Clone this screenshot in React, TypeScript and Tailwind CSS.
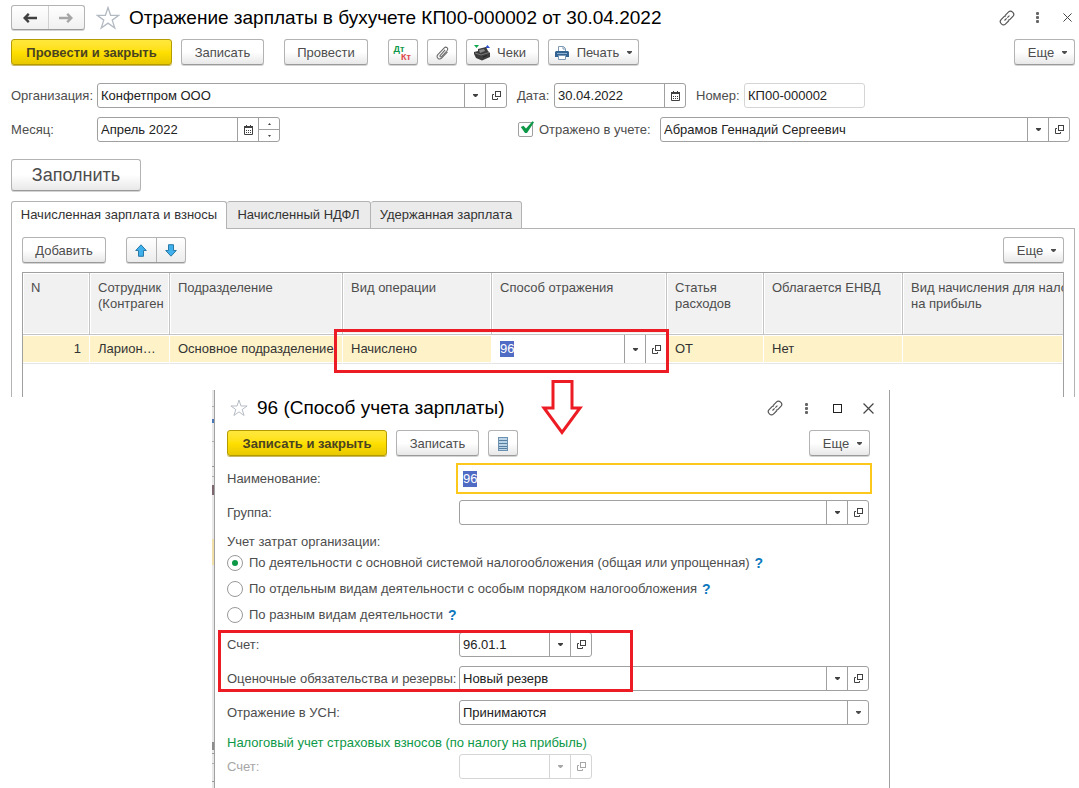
import { useState, type ReactNode } from 'react';
import clsx from 'clsx';

const TABS = ['Начисленная зарплата и взносы', 'Начисленный НДФЛ', 'Удержанная зарплата'];
const TAB_WIDTHS = ['w-[216px]', 'w-[144px]', 'w-[151px]'];

const COLUMNS = [
  { title: 'N', width: 'w-[67px]' },
  { title: 'Сотрудник (Контраген', width: 'w-[80px]' },
  { title: 'Подразделение', width: 'w-[173px]' },
  { title: 'Вид операции', width: 'w-[149px]' },
  { title: 'Способ отражения', width: 'w-[175px]' },
  { title: 'Статья расходов', width: 'w-[97px]' },
  { title: 'Облагается ЕНВД', width: 'w-[139px]' },
];

const COST_OPTIONS = [
  'По деятельности с основной системой налогообложения (общая или упрощенная)',
  'По отдельным видам деятельности с особым порядком налогообложения',
  'По разным видам деятельности',
];

export default function App() {
  const [tab, setTab] = useState(0);

  return (
    <div className="relative min-h-screen overflow-hidden bg-white font-['Liberation_Sans',Arial,sans-serif] text-[13px] leading-4 text-[#4d4d4d]">
      <main className="pl-[11px] pr-1 pt-[5px]">
        {/* Title bar */}
        <header className="flex h-[25px] items-center">
          <div className="flex h-[25px] w-[74px] rounded-[3px] border border-[#b3b3b3] border-b-[#9a9a9a] bg-linear-to-b from-white to-[#f0f0f0] shadow-[0_1px_0_#d4d4d4]">
            <button aria-label="Назад" className="flex flex-1 items-center justify-center border-r border-[#d0d0d0]">
              <ArrowIcon color="#404040" />
            </button>
            <button aria-label="Вперед" className="flex flex-1 items-center justify-center">
              <ArrowIcon color="#a6a6a6" flip />
            </button>
          </div>
          <button aria-label="В избранное" className="ml-[11px]">
            <StarIcon size={24} />
          </button>
          <h1 className="ml-[9px] text-[19px] leading-6 text-black">
            Отражение зарплаты в бухучете КП00-000002 от 30.04.2022
          </h1>
          <div className="ml-auto flex items-center">
            <button aria-label="Ссылка"><LinkIcon /></button>
            <button aria-label="Дополнительно" className="ml-[21px]"><DotsIcon /></button>
            <button aria-label="Закрыть" className="ml-6 mr-[3px]"><CloseIcon size={9} /></button>
          </div>
        </header>

        {/* Command bar */}
        <div className="mt-[9px] flex">
          <Button primary className="w-[161px]">Провести и закрыть</Button>
          <Button className="ml-[9px] w-[83px]">Записать</Button>
          <Button className="ml-5 w-[84px]">Провести</Button>
          <Button className="ml-5 w-[30px]" label="Дт Кт">
            <span className="flex flex-col text-[9px] font-bold leading-[8px]">
              <span className="pr-2 text-[#0d9848]">Дт</span>
              <span className="pl-1.5 text-[#e04848]">Кт</span>
            </span>
          </Button>
          <Button className="ml-[9px] w-[30px]" label="Файлы"><ClipIcon /></Button>
          <Button className="ml-[9px] w-[73px] pr-[6px]"><ReceiptIcon />Чеки</Button>
          <Button className="ml-[9px] w-[91px]"><PrintIcon />Печать<Caret /></Button>
          <Button className="ml-auto w-[61px] pl-[6px]"><span>Еще</span><Caret /></Button>
        </div>

        {/* Document fields */}
        <div className="mt-[18px] grid grid-cols-[496px_1fr] gap-x-[10px] gap-y-[9px]">
          <div className="flex items-center">
            <label htmlFor="org" className="w-[86px]">Организация:</label>
            <Field className="flex-1" buttons={['list', 'open']}>
              <TextInput id="org" value="Конфетпром ООО" />
            </Field>
          </div>
          <div className="flex items-center">
            <label htmlFor="date" className="w-[37px]">Дата:</label>
            <Field className="w-[132px]" buttons={['calendar']}>
              <TextInput id="date" value="30.04.2022" />
            </Field>
            <label htmlFor="number" className="ml-[10px] w-12">Номер:</label>
            <Field className="w-[121px]" muted>
              <TextInput id="number" value="КП00-000002" />
            </Field>
          </div>
          <div className="flex items-center">
            <label htmlFor="month" className="w-[86px]">Месяц:</label>
            <Field className="w-[183px]" buttons={['calendar', 'spin']}>
              <TextInput id="month" value="Апрель 2022" />
            </Field>
          </div>
          <div className="flex items-center pr-[5px]">
            <label className="relative flex w-[143px] items-center">
              <input
                type="checkbox"
                defaultChecked
                className="peer ml-px mr-[6px] size-[15px] appearance-none rounded-[2px] border border-[#a0a0a0]"
              />
              <svg className="absolute left-[3px] top-[-1px] hidden peer-checked:block" width="15" height="14" viewBox="0 0 15 14">
                <path d="M0.8 6 L3.5 4.8 L6 7.5 L12.5 0.3 L14 1.3 L7 12 L5 12 Z" fill="#0d9848" />
              </svg>
              Отражено в учете:
            </label>
            <Field className="flex-1" buttons={['list', 'open']}>
              <TextInput label="Кем отражено в учете" value="Абрамов Геннадий Сергеевич" />
            </Field>
          </div>
        </div>

        <button className="mt-[17px] h-8 w-[130px] rounded-[3px] border border-[#b3b3b3] border-b-[#9a9a9a] bg-linear-to-b from-white via-white to-[#e8e8e8] text-[18px] shadow-[0_1px_0_#d4d4d4]">
          Заполнить
        </button>

        {/* Tabs */}
        <div role="tablist" className="mt-[10px] flex h-7">
          {TABS.map((name, i) => (
            <button
              key={name}
              role="tab"
              aria-selected={tab === i}
              onClick={() => setTab(i)}
              className={clsx(
                'whitespace-nowrap rounded-t-[3px] border-t border-r border-[#b3b3b3] pb-px text-[#333]',
                TAB_WIDTHS[i],
                i === 0 && 'border-l',
                tab === i ? 'bg-white' : 'border-b bg-[#ebebeb]',
              )}
            >
              {name}
            </button>
          ))}
          <div className="flex-1 border-b border-[#b3b3b3]" />
        </div>

        <section className="h-[168px] border-x border-[#b3b3b3] px-[10px] pt-2">
          <div className="flex">
            <Button className="w-[84px]">Добавить</Button>
            <div className="ml-5 flex h-[26px] w-[60px] rounded-[3px] border border-[#b3b3b3] border-b-[#9a9a9a] bg-linear-to-b from-white to-[#ececec] shadow-[0_1px_0_#d4d4d4]">
              <button aria-label="Вверх" className="flex flex-1 items-center justify-center border-r border-[#b3b3b3]">
                <MoveIcon />
              </button>
              <button aria-label="Вниз" className="flex flex-1 items-center justify-center">
                <MoveIcon down />
              </button>
            </div>
            <Button className="ml-auto w-[61px] pl-[6px]"><span>Еще</span><Caret /></Button>
          </div>

          <div className="mt-[9px] h-[125px] overflow-hidden border-x border-t border-[#a0a0a0]">
            <table className="w-full table-fixed border-separate border-spacing-0 text-left">
              <thead>
                <tr className="h-[62px] align-top">
                  {COLUMNS.map((c) => (
                    <th
                      key={c.title}
                      className={clsx('border-b border-r border-[#c4c4c4] bg-[#f1f1f1] pl-2 pt-[7px] font-normal shadow-[inset_0_0_0_1px_#fff]', c.width)}
                    >
                      {c.title}
                    </th>
                  ))}
                  <th className="overflow-hidden border-b border-[#c4c4c4] bg-[#f1f1f1] pl-2 pt-[7px] font-normal shadow-[inset_1px_1px_0_#fff]">
                    <div className="w-[180px]">Вид начисления для налога на прибыль</div>
                  </th>
                </tr>
              </thead>
              <tbody>
                <tr className="h-[29px] text-[#333]">
                  <Cell className="pr-2 text-right">1</Cell>
                  <Cell>Ларион…</Cell>
                  <Cell>Основное подразделение</Cell>
                  <Cell>Начислено</Cell>
                  <td className="border-b border-[#e4e4e4] p-0">
                    <div className="flex h-7 items-stretch pl-2 pr-px">
                      <SelectedInput label="Способ отражения" />
                      <span className="flex-1" />
                      <FieldButton kind="list" />
                      <FieldButton kind="open" />
                    </div>
                  </td>
                  <Cell>ОТ</Cell>
                  <Cell>Нет</Cell>
                  <Cell />
                </tr>
              </tbody>
            </table>
          </div>
        </section>
      </main>

      <MethodWindow />

      {/* Callouts over both windows */}
      <div className="pointer-events-none absolute left-[334px] top-[329px] h-11 w-[335px] border-3 border-[#ed1c24]" />
      <svg className="pointer-events-none absolute left-[541px] top-[379px]" width="42" height="57" viewBox="0 0 42 57">
        <path d="M12 2.5 H31 V29 H39 L21 53.5 L3 29 H12 Z" fill="#fff" stroke="#ed1c24" strokeWidth="3" />
      </svg>
      <div className="pointer-events-none absolute left-[218px] top-[630px] h-[62px] w-[415px] border-3 border-[#ed1c24]" />
    </div>
  );
}

function MethodWindow() {
  const [option, setOption] = useState(0);

  return (
    <div className="absolute bottom-0 left-[212px] top-[390px] flex w-[678px] bg-white">
      {/* Edge of the window behind */}
      <div className="flex w-[2px] flex-col bg-[#e8e8e8]">
        <span className="mt-4 h-px bg-[#b0b0b0]" />
        <span className="mt-3 h-1 bg-[#4a78b8]" />
        <span className="mt-[18px] h-px bg-[#b0b0b0]" />
        <span className="mt-6 h-px bg-[#999]" />
        <span className="mt-[9px] h-px bg-[#b0b0b0]" />
        <span className="mt-2 h-[10px] bg-[#7d6670]" />
        <span className="mt-11 h-[26px] bg-[#f0e0a8]" />
        <span className="mt-[177px] h-2 bg-[#8c8c8c]" />
        <span className="mt-[3px] h-px bg-[#999]" />
        <span className="mt-[9px] h-px bg-[#b0b0b0]" />
        <span className="mt-[17px] h-px bg-[#999]" />
      </div>

      <div className="flex-1 border-x border-[#a0a0a0] pl-3 pr-5">
        <header className="flex h-9 items-center">
          <button aria-label="В избранное" className="ml-[3px]"><StarIcon size={18} /></button>
          <h2 className="ml-[9px] text-[19px] leading-6 text-black">96 (Способ учета зарплаты)</h2>
          <div className="ml-auto flex items-center">
            <button aria-label="Ссылка"><LinkIcon /></button>
            <button aria-label="Дополнительно" className="ml-[22px]"><DotsIcon /></button>
            <button aria-label="Развернуть" className="ml-[25px]">
              <svg width="9" height="9"><rect x="0.5" y="0.5" width="8" height="8" fill="none" stroke="#222" /></svg>
            </button>
            <button aria-label="Закрыть" className="ml-[21px] mr-[-5px]"><CloseIcon size={11} /></button>
          </div>
        </header>

        <div className="mt-1 flex">
          <Button primary className="w-[160px]">Записать и закрыть</Button>
          <Button className="ml-[9px] w-[83px]">Записать</Button>
          <Button className="ml-[9px] w-[30px]" label="Список"><ListIcon /></Button>
          <Button className="ml-auto mr-[-1px] w-[61px] pl-[6px]"><span>Еще</span><Caret /></Button>
        </div>

        <div className="mt-[10px] flex flex-col gap-[9px]">
          <FormRow label="Наименование:" htmlFor="name">
            <div className="flex h-[25px] flex-1 pl-1 outline-2 outline-offset-1 outline-[#fcc81c]">
              <SelectedInput id="name" />
            </div>
          </FormRow>
          <FormRow label="Группа:" htmlFor="group">
            <Field className="flex-1" buttons={['list', 'open']}><TextInput id="group" value="" /></Field>
          </FormRow>
        </div>

        <fieldset className="mt-[9px]">
          <legend>Учет затрат организации:</legend>
          {COST_OPTIONS.map((text, i) => (
            <div key={text} className="flex h-[26px] items-center">
              <label className="flex items-center">
                <input
                  type="radio"
                  name="cost"
                  checked={option === i}
                  onChange={() => setOption(i)}
                  className="mr-[6px] flex size-4 appearance-none items-center justify-center rounded-full border border-[#999] before:size-[6px] before:rounded-full checked:before:bg-[#0d9848]"
                />
                {text}
              </label>
              <a href="#help" className="ml-[5px] text-[14px] font-bold text-[#0d78bd]">?</a>
            </div>
          ))}
        </fieldset>

        <div className="mt-1 flex flex-col gap-[9px]">
          <FormRow label="Счет:" htmlFor="account">
            <Field className="w-[133px]" buttons={['list', 'open']}><TextInput id="account" value="96.01.1" /></Field>
          </FormRow>
          <FormRow label="Оценочные обязательства и резервы:" htmlFor="reserve">
            <Field className="flex-1" buttons={['list', 'open']}><TextInput id="reserve" value="Новый резерв" /></Field>
          </FormRow>
          <FormRow label="Отражение в УСН:" htmlFor="usn">
            <Field className="relative flex-1">
              <select id="usn" className="w-full appearance-none bg-transparent pl-[3px] text-[#222] outline-none">
                <option>Принимаются</option>
                <option>Не принимаются</option>
              </select>
              <span className="pointer-events-none absolute inset-y-0 right-0 flex w-[21px] items-center justify-center border-l border-[#a0a0a0]">
                <CaretShape />
              </span>
            </Field>
          </FormRow>
        </div>

        <h3 className="mt-[10px] text-[#0d9848]">Налоговый учет страховых взносов (по налогу на прибыль)</h3>
        <div className="mt-[3px] flex text-[#a6a6a6]">
          <FormRow label="Счет:" htmlFor="tax-account">
            <Field className="w-[133px]" buttons={['list', 'open']} muted>
              <TextInput id="tax-account" value="" disabled />
            </Field>
          </FormRow>
        </div>
      </div>
    </div>
  );
}

function FormRow({ label, htmlFor, children }: { label: string; htmlFor: string; children: ReactNode }) {
  return (
    <div className="flex items-center">
      <label htmlFor={htmlFor} className="w-[232px] shrink-0 whitespace-nowrap">{label}</label>
      {children}
    </div>
  );
}

interface ButtonProps {
  children: ReactNode;
  className?: string;
  label?: string;
  primary?: boolean;
}

function Button({ children, className, label, primary }: ButtonProps) {
  return (
    <button
      aria-label={label}
      className={clsx(
        'flex h-[26px] shrink-0 items-center justify-center whitespace-nowrap rounded-[3px] border pt-px',
        primary
          ? 'border-[#b39b00] bg-linear-to-b from-[#ffe83c] via-[#ffe000] to-[#e8c800] font-bold text-[#4a4322] shadow-[0_1px_0_#c9b860]'
          : 'border-[#b3b3b3] border-b-[#9a9a9a] bg-linear-to-b from-white via-white to-[#e8e8e8] shadow-[0_1px_0_#d4d4d4]',
        className,
      )}
    >
      {children}
    </button>
  );
}

type FieldButtonKind = 'list' | 'open' | 'calendar' | 'spin';

interface FieldProps {
  children: ReactNode;
  className?: string;
  buttons?: FieldButtonKind[];
  muted?: boolean;
}

function Field({ children, className, buttons = [], muted }: FieldProps) {
  return (
    <div className={clsx('flex h-[25px] rounded-[3px] border bg-white', muted ? 'border-[#d5d5d5]' : 'border-[#a0a0a0]', className)}>
      {children}
      {buttons.map((kind) => <FieldButton key={kind} kind={kind} muted={muted} />)}
    </div>
  );
}

function FieldButton({ kind, muted }: { kind: FieldButtonKind; muted?: boolean }) {
  const box = clsx('flex w-[21px] shrink-0 items-center justify-center border-l', muted ? 'border-[#d5d5d5] text-[#a6a6a6]' : 'border-[#a0a0a0] text-[#404040]');

  if (kind === 'spin') {
    return (
      <div className={clsx(box, 'flex-col')}>
        <button aria-label="Следующий" className="flex w-full flex-1 items-center justify-center border-b border-[#a0a0a0]">
          <svg width="3" height="2"><path d="M0 2 L1.5 0 L3 2 Z" fill="currentColor" /></svg>
        </button>
        <button aria-label="Предыдущий" className="flex w-full flex-1 items-center justify-center">
          <svg width="3" height="2"><path d="M0 0 L1.5 2 L3 0 Z" fill="currentColor" /></svg>
        </button>
      </div>
    );
  }
  if (kind === 'calendar') {
    return (
      <button aria-label="Календарь" className={box}>
        <svg width="9" height="10" viewBox="0 0 9 10">
          <path d="M0.5 2 V9.5 H8.5 V2" fill="none" stroke="currentColor" />
          <path d="M0 1 H9 V3 H0 Z M2 0 H3 V1 H2 Z M6 0 H7 V1 H6 Z" fill="currentColor" />
          <path d="M2 5.5 H7 M2 7.5 H7" stroke="currentColor" strokeDasharray="1 1" />
        </svg>
      </button>
    );
  }
  if (kind === 'open') {
    return (
      <button aria-label="Открыть" className={box}>
        <svg width="9" height="9" viewBox="0 0 9 9" fill="none" stroke="currentColor">
          <rect x="3.5" y="0.5" width="5" height="5" />
          <path d="M2 3.5 H0.5 V8.5 H5.5 V7" />
        </svg>
      </button>
    );
  }
  return (
    <button aria-label="Выбрать" className={box}>
      <CaretShape />
    </button>
  );
}

function TextInput({ id, label, value, disabled }: { id?: string; label?: string; value: string; disabled?: boolean }) {
  return (
    <input
      id={id}
      type="text"
      aria-label={label}
      defaultValue={value}
      disabled={disabled}
      className="w-full min-w-0 flex-1 bg-transparent pl-[3px] text-[#222] outline-none"
    />
  );
}

function SelectedInput({ id, label }: { id?: string; label?: string }) {
  return (
    <input
      id={id}
      type="text"
      aria-label={label}
      defaultValue="96"
      className="field-sizing-content h-4 self-center bg-[#4f6bc4] text-white outline-none"
    />
  );
}

function Cell({ children, className }: { children?: ReactNode; className?: string }) {
  return (
    <td className={clsx('overflow-hidden whitespace-nowrap border-b border-r border-b-[#e4e4e4] border-r-white bg-[#fdf2c8] pl-2 shadow-[inset_0_1px_0_#fff,inset_0_-1px_0_#fff]', className)}>
      {children}
    </td>
  );
}

function CaretShape() {
  return <svg width="5" height="3"><path d="M0 0 H5 V1 L3 3 H2 L0 1 Z" fill="currentColor" /></svg>;
}

function Caret() {
  return <span className="ml-2"><CaretShape /></span>;
}

function ArrowIcon({ color, flip }: { color: string; flip?: boolean }) {
  return (
    <svg width="14" height="10" viewBox="0 0 14 10" className={flip ? 'rotate-180' : ''} fill="none" stroke={color} strokeWidth="2.4">
      <path d="M1.5 5 H14 M5.8 0.8 L1.6 5 L5.8 9.2" />
    </svg>
  );
}

function StarIcon({ size }: { size: number }) {
  return (
    <svg width={size} height={size} viewBox="0 0 24 24" fill="none" stroke="#b4bac2" strokeWidth="1.3">
      <path d="M12 1.5 L14.6 9.3 H22.8 L16.2 14.1 L18.8 22 L12 17.1 L5.2 22 L7.8 14.1 L1.2 9.3 H9.4 Z" />
    </svg>
  );
}

function LinkIcon() {
  return (
    <svg width="16" height="16" viewBox="0 0 16 16" fill="none" stroke="#555" strokeWidth="1.2">
      <path d="M6.2 5.4 L9.6 1.9 C12 -0.4 16.4 3.4 14.1 6.2 L11 9.4 C10.4 10 9.6 10.2 8.9 10.1" />
      <path d="M9.8 10.8 L6.4 14.1 C4 16.4 -0.4 12.6 1.9 9.8 L5 6.6 C5.6 6 6.4 5.8 7.1 5.9" />
      <path d="M5.5 10.5 L10.5 5.5" strokeDasharray="3 1" />
    </svg>
  );
}

function DotsIcon() {
  return (
    <svg width="3" height="11" fill="#666">
      <rect width="3" height="3" rx="1" />
      <rect y="4" width="3" height="3" rx="1" />
      <rect y="8" width="3" height="3" rx="1" />
    </svg>
  );
}

function CloseIcon({ size }: { size: number }) {
  return (
    <svg width={size} height={size} viewBox="0 0 10 10" stroke="#444" strokeWidth="1.1">
      <path d="M0.5 0.5 L9.5 9.5 M9.5 0.5 L0.5 9.5" />
    </svg>
  );
}

function MoveIcon({ down }: { down?: boolean }) {
  return (
    <svg width="12" height="13" viewBox="0 0 12 13" className={down ? 'rotate-180' : ''}>
      <path d="M6 0.8 L11.3 6.5 H8.5 V12.3 H3.5 V6.5 H0.7 Z" fill="#3fb0ec" stroke="#2a7aa8" />
    </svg>
  );
}

function ClipIcon() {
  return (
    <svg width="13" height="14" viewBox="0 0 14 15" fill="none" stroke="#666" strokeWidth="1.1">
      <path d="M9.8 4.2 L4.6 10 C3.6 11.2 5 12.4 6 11.3 L12 4.8 C13.8 2.6 10.9 0 8.9 2 L2 9.3 C-0.4 12.2 3.4 15.6 6 13 L12.4 6.4" />
    </svg>
  );
}

function ReceiptIcon() {
  return (
    <svg width="18" height="16" viewBox="0 0 18 16" className="mr-[6px]">
      <path d="M1 0 H6 L3.5 3 Z" fill="#0da84e" />
      <path d="M12 3 H17 L14.5 0 Z" fill="#2b4fd0" />
      <path d="M5 4 L13 2 L15 6 L17 8 V12 L9 15.5 L3 13 L1 9 V7 L5 6 Z" fill="#3c3c3c" />
      <path d="M6 5 L11 4 L12 6 L7 8 Z" fill="#888" />
      <path d="M2 8 L8 10 L16 7.5" fill="none" stroke="#777" />
      <path d="M10 12 L14 10.5" stroke="#222" />
    </svg>
  );
}

function PrintIcon() {
  return (
    <svg width="14" height="14" viewBox="0 0 14 14" className="mr-2">
      <path d="M3.5 5.5 V0.5 H8.5 L10.5 2.5 V5.5" fill="#fff" stroke="#7b98b4" />
      <path d="M8 1 V3 H10" fill="none" stroke="#7b98b4" />
      <path d="M1 5 H13 L14 6 V11 H0 V6 Z" fill="#336392" />
      <path d="M2 7.5 H12" stroke="#8fb2d2" />
      <path d="M3.5 9.5 H10.5 V13.5 H3.5 Z" fill="#fff" stroke="#7b98b4" />
    </svg>
  );
}

function ListIcon() {
  return (
    <svg width="10" height="14" viewBox="0 0 10 14">
      <rect x="0.5" y="0.5" width="9" height="13" fill="#bcd4e8" stroke="#6c90b0" />
      <path d="M1 3.5 H9 M1 6.5 H9 M1 9.5 H9 M1 11.5 H9" stroke="#587ea0" />
    </svg>
  );
}
